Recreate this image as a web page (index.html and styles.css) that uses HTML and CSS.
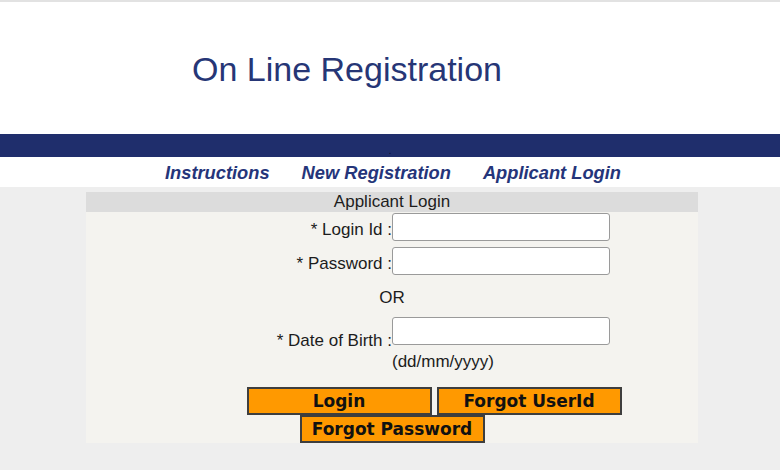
FILE: index.html
```html
<!DOCTYPE html>
<html lang="en">
<head>
  <meta charset="UTF-8" />
  <meta name="viewport" content="width=device-width, initial-scale=1.0"/>
  <title>On Line Registration</title>
  <link rel="stylesheet" href="styles.css">
</head>
<body>
  <div class="header">
    <h1>On Line Registration</h1>
  </div>
  <div class="band"><span class="dot">.</span></div>
  <div class="menu">
    <a href="#">Instructions</a>
    <a href="#">New Registration</a>
    <a href="#">Applicant Login</a>
  </div>

  <div class="login-panel">
    <div class="panel-title">Applicant Login</div>
    <form id="login-form">
      <div class="row first">
        <label for="loginid">* Login Id :</label>
        <input type="text" id="loginid" />
      </div>
      <div class="row">
        <label for="password">* Password :</label>
        <input type="password" id="password" />
      </div>
      <div class="or">OR</div>
      <div class="row dob">
        <label for="dob">* Date of Birth :</label>
        <div class="dob-field">
          <input type="text" id="dob" />
          <div class="hint">(dd/mm/yyyy)</div>
        </div>
      </div>

      <div class="actions">
        <div class="btn-row top">
          <button type="submit">Login</button>
          <button type="button">Forgot UserId</button>
        </div>
        <div class="btn-row">
          <button type="button">Forgot Password</button>
        </div>
      </div>
    </form>
  </div>
</body>
</html>
```

FILE: styles.css
```css
body {
  margin: 0;
  background: #eeeeee;
  font-family: "Liberation Sans", Arial, sans-serif;
  color: #1c1c1c;
}

.header {
  box-sizing: border-box;
  height: 134px;
  background: #fff;
  border-top: 2px solid #e2e2e2;
  padding: 47px 0 0 192px;
}

.header h1 {
  margin: 0;
  font-size: 34px;
  line-height: 40px;
  font-weight: normal;
  color: #263676;
}

.band {
  height: 23px;
  background: #1f2e6c;
  text-align: center;
  line-height: 23px;
}

.dot {
  font-size: 11px;
  color: #0c1330;
  position: relative;
  top: 3px;
}

.menu {
  height: 30px;
  background: #fff;
  display: flex;
  justify-content: center;
  gap: 32px;
  padding-left: 6px;
}

.menu a {
  font-size: 18.3px;
  line-height: 32px;
  font-weight: bold;
  font-style: italic;
  color: #25357a;
  text-decoration: none;
}

.login-panel {
  width: 612px;
  margin: 5px 0 0 86px;
  background: #f4f3ef;
  font-size: 17px;
}

.panel-title {
  height: 20px;
  line-height: 20px;
  background: #dcdcdc;
  text-align: center;
}

.row {
  display: flex;
  align-items: flex-start;
  margin-top: 6px;
}

.row.first {
  margin-top: 1px;
}

.row label {
  width: 306px;
  padding-top: 7px;
  text-align: right;
  line-height: 20px;
}

.row input {
  box-sizing: border-box;
  width: 218px;
  height: 28px;
  margin: 0;
  border: 1px solid #9a9a9a;
  border-radius: 3px;
  background: #fff;
}

.or {
  margin-top: 13px;
  line-height: 20px;
  text-align: center;
}

.row.dob {
  margin-top: 9px;
}

.row.dob label {
  padding-top: 14px;
}

.hint {
  margin-top: 7px;
  line-height: 20px;
}

.actions {
  margin-top: 15px;
  display: flex;
  flex-direction: column;
  align-items: center;
}

.btn-row {
  display: flex;
  gap: 5px;
}

.btn-row.top {
  margin-left: 84px;
}

.actions button {
  box-sizing: border-box;
  width: 185px;
  height: 28px;
  padding: 0;
  border: 2px solid #3e3e3e;
  background: #ff9900;
  font-family: "DejaVu Sans", Verdana, sans-serif;
  font-size: 17px;
  font-weight: bold;
  color: #111;
  cursor: pointer;
}
```
